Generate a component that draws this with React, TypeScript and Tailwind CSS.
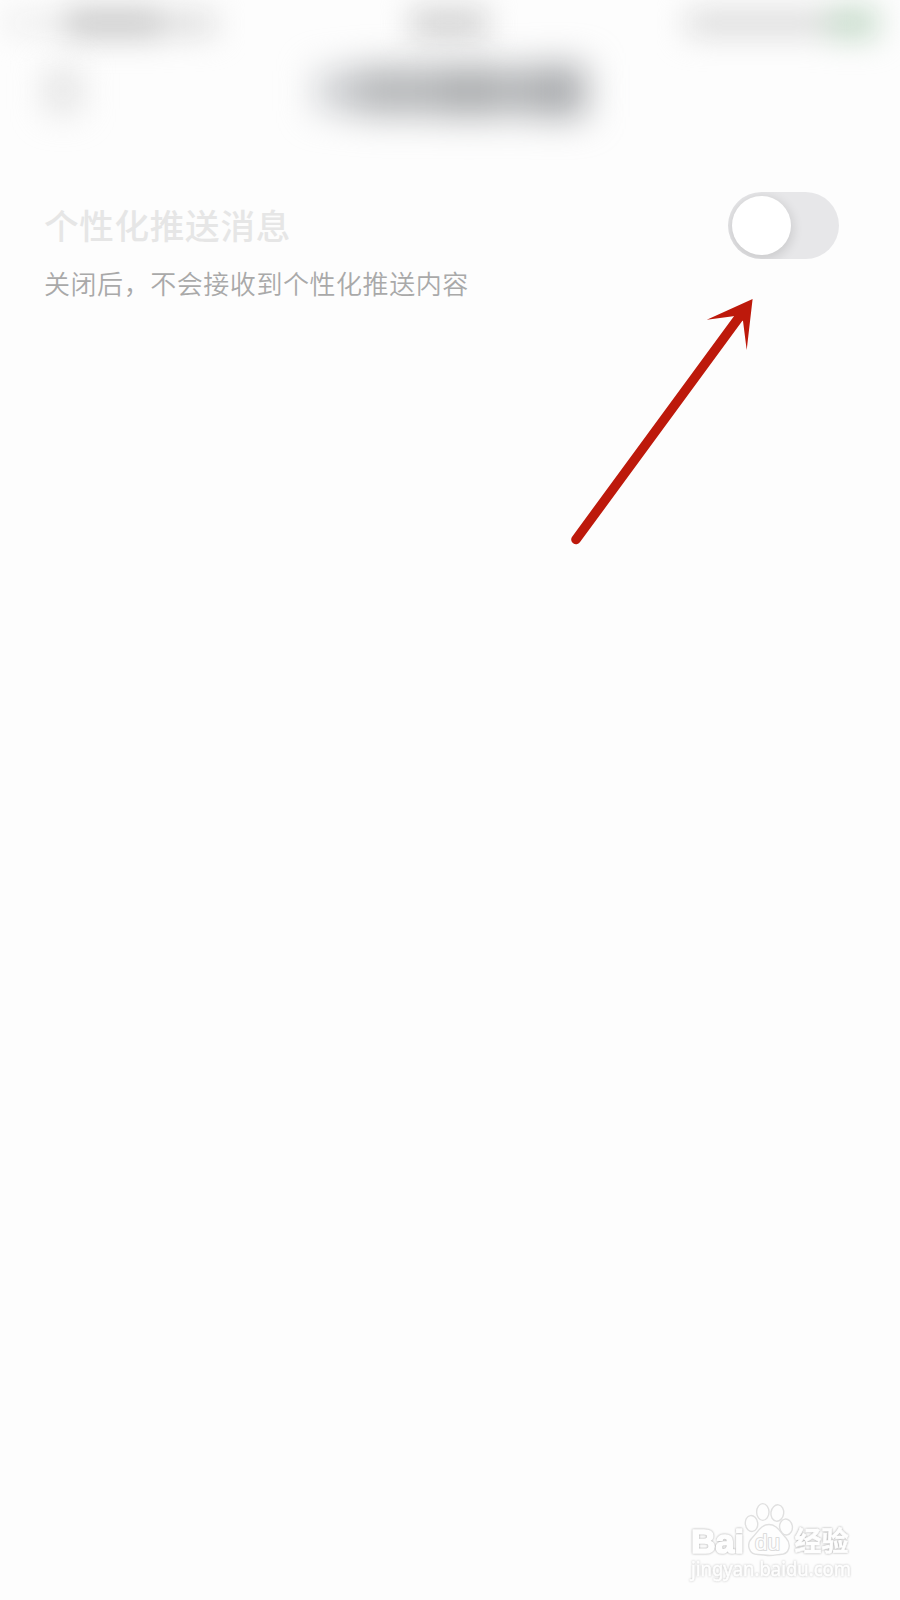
import React from 'react';

const cjk = "font-['Noto_Sans_CJK_SC','Noto_Sans',sans-serif]";

function StatusBar() {
  return (
    <div className="flex h-[46px] items-center pl-[6px] blur-[15px]">
      <div className="h-[18px] w-[60px] bg-[#ebebeb]" />
      <div className="h-[30px] w-[94px] bg-[#c9c9c9]" />
      <div className="h-[25px] w-[56px] bg-[#dedede]" />
      <div className="ml-[194px] h-[30px] w-[78px] bg-[#d2d2d2]" />
      <div className="ml-[198px] h-[26px] w-[142px] bg-[#dcdcdc]" />
      <div className="h-[32px] w-[50px] bg-[#c6dbca]" />
    </div>
  );
}

function TitleBar() {
  return (
    <div className="flex h-[90px] items-center pl-[50px] blur-[18px]">
      <div className="h-[38px] w-[26px] bg-[#d4d4d4]" />
      <div className="ml-[240px] h-[40px] w-[40px] bg-[#cbcdd0]" />
      <div className="h-[48px] w-[88px] bg-[#b2b4b6]" />
      <div className="h-[50px] w-[50px] bg-[#a8aaac]" />
      <div className="h-[48px] w-[42px] bg-[#b2b4b6]" />
      <div className="h-[52px] w-[50px] bg-[#a6a8ab]" />
    </div>
  );
}

function Toggle() {
  return (
    <button
      type="button"
      role="switch"
      aria-checked="false"
      className="flex h-[67px] w-[111px] shrink-0 items-center overflow-hidden rounded-full bg-[#e7e7e9] pl-[4px]"
    >
      <span className="block size-[59px] rounded-full bg-white shadow-[0_3px_11px_2px_rgba(0,0,0,0.12)]" />
    </button>
  );
}

function Arrow() {
  return (
    <svg className="absolute top-[290px] left-[560px]" width="200" height="265" viewBox="560 290 200 265">
      <path d="M576 539.5 L740 316" stroke="#bd190b" strokeWidth="9.6" strokeLinecap="round" fill="none" />
      <path d="M752.6 299 L706.8 319.7 L735 316 L743 321 L746.7 350 Z" fill="#bd190b" />
    </svg>
  );
}

function Watermark() {
  return (
    <svg className="absolute top-[1495px] left-[680px]" width="185" height="90" viewBox="680 1495 185 90">
      <g fill="#fefefe" stroke="#e0e0e0" strokeWidth="1.4">
        <ellipse cx="751.5" cy="1523.5" rx="6.2" ry="8" transform="rotate(-8 751.5 1523.5)" />
        <ellipse cx="762.8" cy="1512" rx="6.2" ry="8.4" />
        <ellipse cx="777.3" cy="1513" rx="6.4" ry="8.2" transform="rotate(8 777.3 1513)" />
        <ellipse cx="786" cy="1527" rx="6.4" ry="8" transform="rotate(-8 786 1527)" />
        <path d="M769 1524.5 C761 1524.5 758 1532 752 1538 C746 1544 748.5 1554.5 758 1554.5 C763 1554.5 765 1555.5 770 1555.5 C775 1555.5 777 1554.5 780 1554.5 C790 1554.5 791.5 1544 786 1538 C780 1532 777 1524.5 769 1524.5 Z" />
      </g>
      <g className="drop-shadow-[0_0_0.8px_rgba(0,0,0,0.34)]" fill="#fefefe" stroke="#fefefe" strokeWidth="1.6" strokeLinejoin="round" paintOrder="stroke" fontWeight="700">
        <text x="691" y="1553" fontSize="34" textLength="53" lengthAdjust="spacingAndGlyphs" fontFamily="Liberation Sans, sans-serif">Bai</text>
        <text x="794.5" y="1551" fontSize="27" fontFamily="Noto Sans CJK SC, sans-serif" strokeWidth="0.6">经验</text>
      </g>
      <text x="755" y="1550" fontSize="22" textLength="25" lengthAdjust="spacingAndGlyphs" fontFamily="Liberation Sans, sans-serif" fill="#fefefe" stroke="#dcdcdc" strokeWidth="2" strokeLinejoin="round" paintOrder="stroke">du</text>
      <text className="drop-shadow-[0_0_0.8px_rgba(0,0,0,0.24)]" x="691" y="1575.5" fontSize="20" textLength="160" lengthAdjust="spacingAndGlyphs" fontFamily="Noto Sans, sans-serif" fill="#fefefe" stroke="#fefefe" strokeWidth="0.6">
        jingyan.baidu.com
      </text>
    </svg>
  );
}

export default function App() {
  return (
    <div className={`relative h-[1600px] w-[900px] overflow-hidden bg-[#fdfdfd] ${cjk}`}>
      <header className="h-[160px]">
        <StatusBar />
        <TitleBar />
      </header>
      <main className="flex items-start justify-between pt-[32px] pr-[61px] pl-[44px]">
        <div className="pt-[6px]">
          <h1 className="text-[34.6px] leading-[52px] font-medium tracking-[0.7px] text-[#e6e6e6]">个性化推送消息</h1>
          <p className="mt-[20px] text-[26px] leading-[26px] font-[350] tracking-[0.55px] text-[#a9a9a9]">关闭后，不会接收到个性化推送内容</p>
        </div>
        <Toggle />
      </main>
      <Arrow />
      <Watermark />
    </div>
  );
}
